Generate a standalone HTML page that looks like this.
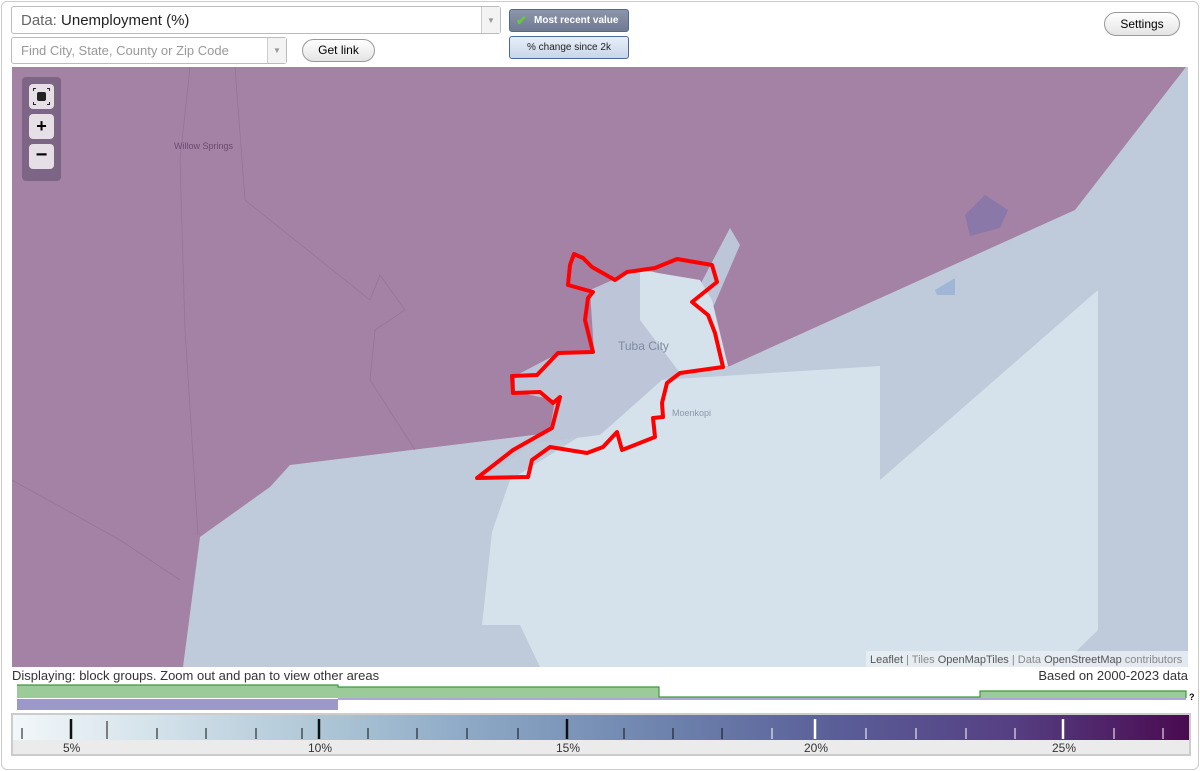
<!DOCTYPE html>
<html><head><meta charset="utf-8"><style>
body{margin:0;width:1200px;height:771px;background:#fff;font-family:"Liberation Sans",sans-serif;overflow:hidden;position:relative}
.frame{position:absolute;left:1px;top:1px;width:1196px;height:767px;border:1px solid #ccc;border-radius:6px}
.sel{position:absolute;border:1px solid #bbb;border-radius:3px;background:#fff;box-sizing:border-box}
.arr{position:absolute;right:0;top:0;bottom:0;width:18px;border-left:1px solid #ccc;background:#f3f3f3;color:#999;font-size:8px;text-align:center}
.btn{position:absolute;border:1px solid #999;border-radius:12px;background:linear-gradient(#fff,#e4e4e4);font-size:12px;text-align:center;box-sizing:border-box}
</style></head><body>
<div class="frame"></div>
<div class="sel" style="left:11px;top:6px;width:490px;height:28px;font-size:15px;padding:5px 9px;color:#222"><span style="color:#666">Data:</span> Unemployment (%)<div class="arr" style="line-height:27px">▼</div></div>
<div class="sel" style="left:11px;top:37px;width:276px;height:27px;font-size:13px;padding:5px 9px;color:#999">Find City, State, County or Zip Code<div class="arr" style="line-height:26px">▼</div></div>
<div class="btn" style="left:302px;top:39px;width:73px;height:23px;line-height:21px">Get link</div>
<div style="position:absolute;left:509px;top:9px;width:120px;height:23px;border:1px solid #4a6a9a;border-radius:3px;background:linear-gradient(#8c96aa,#6f7b92);color:#fff;font-size:10px;font-weight:bold;line-height:21px;box-sizing:border-box;padding-left:24px">Most recent value<span style="position:absolute;left:6px;top:0;color:#6c3;font-size:13px">✔</span></div>
<div style="position:absolute;left:509px;top:36px;width:120px;height:23px;border:1px solid #4a6a9a;border-radius:3px;background:linear-gradient(#e8eef8,#c8d6ea);color:#222;font-size:10px;line-height:21px;text-align:center;box-sizing:border-box">% change since 2k</div>
<div class="btn" style="left:1104px;top:12px;width:76px;height:24px;line-height:22px">Settings</div>

<svg style="position:absolute;left:12px;top:67px" width="1176" height="600" viewBox="12 67 1176 600">
<rect x="12" y="67" width="1176" height="600" fill="#bfcbdb"/>
<polygon points="660,380 880,366 880,480 1098,290 1098,630 1060,667 540,667 520,625 482,625 492,532 510,480 590,430" fill="#d6e2eb"/>
<polygon points="12,67 1186,67 1075,210 730,366 660,378 590,428 290,465 270,487 200,537 183,667 12,667" fill="#a482a5"/>
<polygon points="590,290 640,268 700,285 730,228 740,245 712,310 728,366 662,380 600,435 520,445 485,478 520,452 550,430 555,400 515,392 515,376 555,355 594,352" fill="#bcc6d8"/>
<polygon points="640,270 700,280 712,300 728,366 680,373 640,320" fill="#d6e2eb"/>
<polygon points="965,215 985,195 1008,210 1000,228 970,236" fill="#8a78a8"/>
<polygon points="935,290 955,278 955,295 937,295" fill="#9fb6d6"/>
<g fill="none" stroke="#8d6b8f" stroke-width="0.8" opacity="0.6"><path d="M190,67 L180,160 L185,330 L198,535"/><path d="M235,67 L245,200 L320,260 L370,300 L380,275 L405,310 L375,330 L370,380 L415,450"/><path d="M12,480 L120,540 L180,580"/></g>
<polygon points="574,254 583,258 592,267 615,280 627,272 655,268 677,259 712,265 717,282 692,302 708,315 715,333 723,367 680,373 667,383 662,403 663,417 653,418 655,437 622,450 617,432 603,447 587,453 550,447 532,460 528,477 477,478 513,450 552,428 560,397 553,403 540,392 513,393 512,376 537,375 558,353 593,352 585,320 588,298 593,292 568,285 570,265" fill="none" stroke="#f00" stroke-width="4" stroke-linejoin="round"/>
<text x="618" y="350" font-size="12" fill="#7d8aa0" font-family="Liberation Sans">Tuba City</text>
<text x="672" y="416" font-size="9" fill="#8a98ad" font-family="Liberation Sans">Moenkopi</text>
<text x="174" y="149" font-size="9" fill="#6a4a70" font-family="Liberation Sans">Willow Springs</text>
<rect x="866" y="651" width="322" height="16" fill="#e8eef3" opacity="0.85"/>
<text x="870" y="663" font-size="11" fill="#888" font-family="Liberation Sans"><tspan fill="#555">Leaflet</tspan> | Tiles <tspan fill="#555">OpenMapTiles</tspan> | Data <tspan fill="#555">OpenStreetMap</tspan> contributors</text>
</svg>
<div style="position:absolute;left:22px;top:77px;width:39px;height:104px;background:#7d6685;border-radius:4px"></div>
<div style="position:absolute;left:29px;top:84px;width:25px;height:25px;background:#e6dfe6;border-radius:4px">
<svg width="25" height="25" style="position:absolute;left:0;top:0"><rect x="8" y="8" width="9" height="9" rx="2" fill="#222"/><path d="M4,4h3v1H5v2H4zM21,4h-3v1h2v2h1zM4,21h3v-1H5v-2H4zM21,21h-3v-1h2v-2h1z" fill="#222"/></svg></div>
<div style="position:absolute;left:29px;top:114px;width:25px;height:25px;background:#e6dfe6;border-radius:4px;font:bold 18px/25px 'Liberation Sans';text-align:center">+</div>
<div style="position:absolute;left:29px;top:144px;width:25px;height:25px;background:#e6dfe6;border-radius:4px;font:bold 20px/23px 'Liberation Sans';text-align:center">−</div>

<div style="position:absolute;left:12px;top:668px;font-size:13px;color:#333">Displaying: block groups. Zoom out and pan to view other areas</div>
<div style="position:absolute;right:12px;top:668px;font-size:13px;color:#333">Based on 2000-2023 data</div>
<svg style="position:absolute;left:0;top:684px" width="1200" height="28">
<path d="M17,1 H338 V3 H659 V13 H980 V7 H1186 V14 H17 Z" fill="#9acb98"/>
<path d="M17,1 H338 V3 H659 V13 H980 V7 H1186 V14" fill="none" stroke="#3d9a3d" stroke-width="1.2"/>
<rect x="17" y="15" width="321" height="11" fill="#9b99ca"/>
<rect x="338" y="14" width="848" height="2" fill="#aaa8d6"/>
<text x="1189" y="16" font-size="9" font-weight="bold">?</text>
</svg>
<div style="position:absolute;left:11px;top:713px;width:1180px;height:43px;border:2px solid #ccc;box-sizing:border-box;background:#ebebeb">
<div style="position:absolute;left:0;top:0;right:0;height:25px;background:linear-gradient(90deg,#f2f7fa,#d4e2ea 12%,#a9c3d4 28%,#8aa6c4 40%,#6e84ae 55%,#5a5e98 70%,#553f82 85%,#4a0a50)"></div>
<svg style="position:absolute;left:0;top:0" width="1176" height="40" font-family="Liberation Sans" font-size="12" fill="#333">
<g stroke="#111" stroke-width="1"><path d="M9,13V24M94,6V24M144,13V24M193,13V24M243,13V24M289,13V24"/><path d="M58,4V24M306,4V24M554,4V24" stroke-width="2.5"/><path d="M355,13V24M404,13V24M454,13V24M505,13V24M611,13V24M660,13V24M709,13V24"/></g>
<g stroke="#fff"><path d="M759,13V24M853,13V24M903,13V24M953,13V24M1002,13V24M1101,13V24M1150,13V24"/><path d="M802,4V24M1050,4V24" stroke-width="2.5"/></g>
<text x="50" y="37">5%</text><text x="295" y="37">10%</text><text x="543" y="37">15%</text><text x="791" y="37">20%</text><text x="1039" y="37">25%</text>
</svg></div>
</body></html>
